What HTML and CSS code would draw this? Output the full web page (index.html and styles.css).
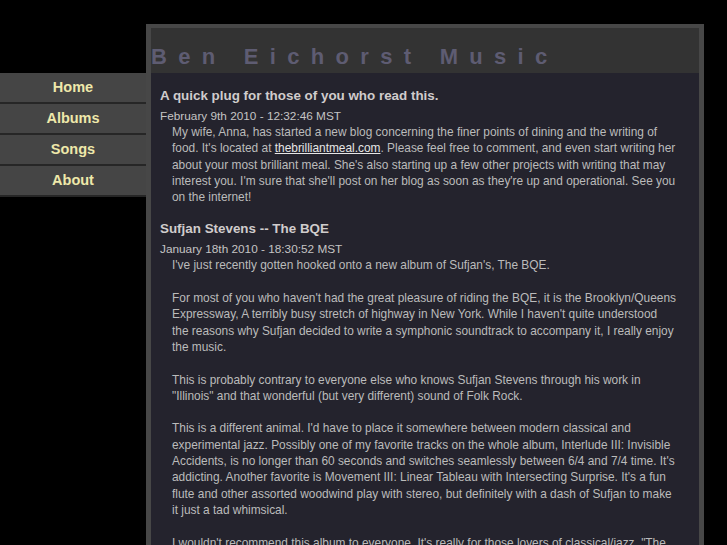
FILE: index.html
```html
<!DOCTYPE html>
<html>
<head>
<meta charset="utf-8">
<title>Ben Eichorst Music</title>
<link rel="stylesheet" href="styles.css">
</head>
<body>
<div class="page">
  <nav class="nav">
    <a class="nav-item" href="#">Home</a>
    <a class="nav-item" href="#">Albums</a>
    <a class="nav-item" href="#">Songs</a>
    <a class="nav-item" href="#">About</a>
  </nav>
  <div class="main">
    <header class="header">
      <h1 class="site-title">Ben Eichorst Music</h1>
    </header>
    <div class="content">
      <div class="post">
        <h2 class="post-title">A quick plug for those of you who read this.</h2>
        <div class="post-date">February 9th 2010 - 12:32:46 MST</div>
        <div class="post-body">My wife, Anna, has started a new blog concerning the finer points of dining and the writing of food. It's located at <a href="#">thebrilliantmeal.com</a>. Please feel free to comment, and even start writing her about your most brilliant meal. She's also starting up a few other projects with writing that may interest you. I'm sure that she'll post on her blog as soon as they're up and operational. See you on the internet!</div>
      </div>
      <div class="post">
        <h2 class="post-title">Sufjan Stevens -- The BQE</h2>
        <div class="post-date">January 18th 2010 - 18:30:52 MST</div>
        <div class="post-body">I've just recently gotten hooked onto a new album of Sufjan's, The BQE.<br><br>For most of you who haven't had the great pleasure of riding the BQE, it is the Brooklyn/Queens Expressway, A terribly busy stretch of highway in New York. While I haven't quite understood <span class="nobr">the reasons</span> why Sufjan decided to write a symphonic soundtrack to accompany it, I really enjoy the music.<br><br>This is probably contrary to everyone else who knows Sufjan Stevens through his work in "Illinois" and that wonderful (but very different) sound of Folk Rock.<br><br>This is a different animal. I'd have to place it somewhere between modern classical and experimental jazz. Possibly one of my favorite tracks on the whole album, Interlude III: Invisible Accidents, is no longer than 60 seconds and switches seamlessly between 6/4 and 7/4 time. It's addicting. Another favorite is Movement III: Linear Tableau with Intersecting Surprise. It's a fun flute and other assorted woodwind play with stereo, but definitely with a dash of Sufjan to make it just a tad whimsical.<br><br>I wouldn't recommend this album to everyone. It's really for those lovers of classical/jazz. "The BQE" is a challenging listen, but well worth the time.</div>
      </div>
    </div>
  </div>
</div>
</body>
</html>
```
FILE: styles.css
```css
html, body {
  margin: 0;
  padding: 0;
  background: #000;
}

body {
  font-family: "Liberation Sans", Arial, sans-serif;
  color: #bbb;
}

.page {
  display: flex;
  align-items: flex-start;
}

.nav {
  width: 146px;
  margin-top: 73px;
  display: flex;
  flex-direction: column;
  flex-shrink: 0;
}

.nav-item {
  display: block;
  height: 29px;
  line-height: 28px;
  background: #454545;
  border-bottom: 2px solid #262626;
  color: #eee8aa;
  font-weight: bold;
  font-size: 14.5px;
  text-align: center;
  text-decoration: none;
}

.main {
  margin-top: 24px;
  width: 548px;
  border-style: solid;
  border-color: #474747;
  border-width: 4px 5px 0 5px;
  background: #24232d;
  min-height: 530px;
}

.header {
  height: 45px;
  background: #333;
  box-sizing: border-box;
  padding: 16px 0 3px 0;
}

.site-title {
  margin: 0;
  font-size: 22px;
  line-height: 26px;
  font-weight: bold;
  letter-spacing: 11.3px;
  color: #5e5c72;
  white-space: nowrap;
}

.content {
  padding: 13px 21.5px 0 9px;
}

.post {
  margin-bottom: 14px;
}

.post-title {
  margin: 0 0 2px 0;
  font-size: 13.4px;
  line-height: 20px;
  font-weight: bold;
  color: #d0cccc;
}

.post-date {
  font-size: 11.8px;
  line-height: 16px;
  color: #c4c4c4;
}

.post-body {
  margin-left: 12px;
  font-size: 11.9px;
  line-height: 16.3px;
  color: #bbbbbb;
}

.post-body a {
  color: #e6e6e6;
  text-decoration: underline;
}

.nobr {
  white-space: nowrap;
}
```
